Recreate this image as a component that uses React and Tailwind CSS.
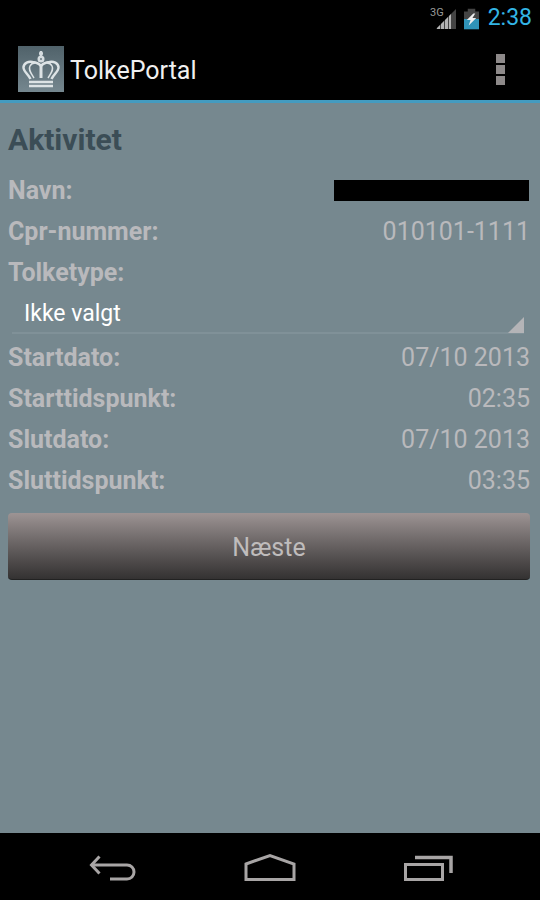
import React, { useState } from 'react';

const TIMES = [
  { label: 'Startdato:', value: '07/10 2013' },
  { label: 'Starttidspunkt:', value: '02:35' },
  { label: 'Slutdato:', value: '07/10 2013' },
  { label: 'Sluttidspunkt:', value: '03:35' },
];

const StatusBar = () => (
  <div className="flex h-[37px] items-center justify-end pr-2">
    <span className="mb-3 text-[11px] leading-3 text-[#999]">3G</span>
    <svg className="-ml-2 h-5 w-5" viewBox="0 0 20 20" aria-hidden="true">
      <path d="M0 20 20 0V20Z" fill="#444" />
      <path d="M1 20v-1l3-3v4ZM5 20v-5l3-3v8ZM9 20v-9l3-3v12ZM13 20V7l2-2v15Z" fill="#b4b4b4" />
    </svg>
    <svg className="ml-2 h-[22px] w-[15px]" viewBox="0 0 16 22" aria-hidden="true">
      <path d="M4 0h8v3h4v8H0V3h4Z" fill="#444" />
      <path d="M0 11h16v11H0Z" fill="#2f93b8" />
      <path d="m10 5-7 7h4l-2 6 8-8H9l3-5Z" fill="#eee" />
    </svg>
    <span className="ml-[9px] text-[23px] text-[#33b5e5]">2:38</span>
  </div>
);

const CrownLogo = () => (
  <svg className="h-[46px] w-[46px]" viewBox="0 0 46 46" aria-hidden="true">
    <defs>
      <linearGradient id="logo-bg" x1="0" y1="0" x2="0" y2="1">
        <stop offset="0" stopColor="#50626a" />
        <stop offset="1" stopColor="#75878f" />
      </linearGradient>
    </defs>
    <rect width="46" height="46" fill="url(#logo-bg)" />
    <circle cx="23" cy="13" r="3.5" fill="#d5dcdf" />
    <circle cx="23" cy="13" r="1" fill="#687a82" />
    <path d="M23 5v5M21 7.500h4" stroke="#d5dcdf" strokeWidth="2.500" />
    <g fill="none" stroke="#dde3e5">
      <path d="M12.500 33C10 28 5 25 5.500 21c.5-4 5-6 9-5 4 .5 7 2 8.500 4 1.500-2 4.500-3.500 8.500-4 4-1 8.500 1 9 5 .5 4-4.500 7-7 12" strokeWidth="2.500" />
      <path d="M16 32c-3-5-6-8-4-12 1-2 3-3 5-3M30 32c3-5 6-8 4-12-1-2-3-3-5-3" strokeWidth="1.500" />
      <path d="M23 20v12" strokeWidth="3" />
      <path d="M11 36h24M11 40h24" strokeWidth="2.500" />
    </g>
  </svg>
);

const Row = ({ label, children }) => (
  <div className="flex h-[41px] items-center justify-between">
    <dt className="font-bold">{label}</dt>
    <dd>{children}</dd>
  </div>
);

const NavBar = () => (
  <nav className="grid h-[67px] grid-cols-3 items-center bg-black px-[33px] pt-1">
    <button type="button" aria-label="Tilbage" className="flex justify-center">
      <svg className="h-8 w-12" viewBox="0 0 48 32" fill="none" stroke="#a8a5a5" strokeWidth="3" aria-hidden="true">
        <path d="M11.500 3.500 3.500 12l8 8.500" />
        <path d="M3 12h36c4 0 7 3 7 7s-3 7-7 7H22" />
      </svg>
    </button>
    <button type="button" aria-label="Hjem" className="flex justify-center">
      <svg className="h-8 w-[52px]" viewBox="0 0 52 32" fill="none" stroke="#a8a5a5" strokeWidth="3" aria-hidden="true">
        <path d="M2 11 26 2.500 50 11v15.500H2Z" />
      </svg>
    </button>
    <button type="button" aria-label="Seneste" className="flex justify-center">
      <svg className="h-8 w-[50px]" viewBox="0 0 50 32" fill="none" stroke="#a8a5a5" strokeWidth="3" aria-hidden="true">
        <path d="M2.500 11.500h37v15h-37Z" />
        <path d="M12 4.500h36V20" strokeWidth="3.500" />
      </svg>
    </button>
  </nav>
);

const App = () => {
  const [type, setType] = useState('none');

  return (
    <div className="flex min-h-screen flex-col bg-[#76888f] font-[Roboto,sans-serif]">
      <header className="border-b-[3px] border-[#449bc0] bg-black">
        <StatusBar />
        <div className="flex h-[63px] items-center justify-between pl-[18px] pr-[35px]">
          <div className="flex items-center gap-[6px]">
            <CrownLogo />
            <h1 className="pt-1 text-[25px] text-[#f0f0f0]">TolkePortal</h1>
          </div>
          <button type="button" aria-label="Menu" className="flex flex-col gap-[2px] pt-[2px]">
            <span className="h-[9px] w-[9px] bg-[#8d8989]" />
            <span className="h-[9px] w-[9px] bg-[#8d8989]" />
            <span className="h-[9px] w-[9px] bg-[#8d8989]" />
          </button>
        </div>
      </header>

      <main className="flex-1 px-2 pr-[10px] text-[25px] text-[#b9b9bc]">
        <h2 className="flex h-[67px] items-center pt-[6px] text-[30px] font-bold text-[#3b4d56]">Aktivitet</h2>

        <dl>
          <Row label="Navn:">
            <span className="mr-px block h-[21px] w-[195px] bg-black" />
          </Row>
          <Row label="Cpr-nummer:">010101-1111</Row>
        </dl>

        <label htmlFor="tolketype" className="flex h-[41px] items-center font-bold">Tolketype:</label>
        <div className="relative mr-[6px] h-[44px] pl-1">
          <select
            id="tolketype"
            value={type}
            onChange={(e) => setType(e.target.value)}
            className="h-[41px] w-full appearance-none border-b-2 border-[#809198] pl-3 pt-1 text-[23px] text-white outline-none"
          >
            <option value="none">Ikke valgt</option>
          </select>
          <svg className="pointer-events-none absolute right-0 top-6 h-4 w-4" viewBox="0 0 16 16" aria-hidden="true">
            <path d="M16 0v16H0Z" fill="#b4b4b7" />
          </svg>
        </div>

        <dl>
          {TIMES.map((t) => (
            <Row key={t.label} label={t.label}>{t.value}</Row>
          ))}
        </dl>

        <button
          type="button"
          className="mt-3 h-[67px] w-full rounded-[4px] border-b border-[#222] bg-linear-to-b from-[#9d9494] to-[#343232] pt-1 text-[#bfbcbc]"
        >
          Næste
        </button>
      </main>

      <NavBar />
    </div>
  );
};

export default App;
